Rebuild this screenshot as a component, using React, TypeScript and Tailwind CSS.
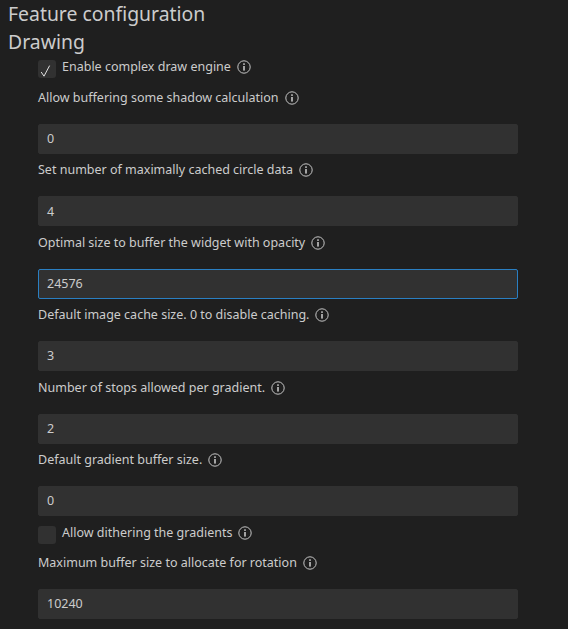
function InfoIcon() {
  return (
    <svg width="14" height="14" viewBox="0 0 14 14" fill="none" className="ml-[6px] shrink-0">
      <circle cx="7" cy="7" r="6.2" stroke="#c5c5c5" strokeWidth="1" />
      <rect x="6.2" y="3.3" width="1.6" height="1.6" fill="#c5c5c5" />
      <rect x="6.2" y="6" width="1.6" height="4.6" fill="#c5c5c5" />
    </svg>
  );
}

function CheckRow({ label, checked, className }: { label: string; checked?: boolean; className?: string }) {
  return (
    <div className={`flex h-[18px] items-start ${className ?? ''}`}>
      <div className="h-[18px] w-[18px] rounded-[3px] bg-[#313131]">
        {checked && (
          <svg width="18" height="18" viewBox="0 0 18 18" fill="none">
            <path d="M3.2 12 L6 16.2 L11.6 5.6" stroke="#e0e0e0" strokeWidth="1" />
          </svg>
        )}
      </div>
      <div className="ml-[6px] flex h-[14px] items-center whitespace-nowrap">
        <span>{label}</span>
        <InfoIcon />
      </div>
    </div>
  );
}

function Field({ label, value, focused, top }: { label: string; value: string; focused?: boolean; top?: string }) {
  return (
    <div>
      <div className={`flex items-center h-[18px] whitespace-nowrap ${top ?? 'mt-[7.6px]'} mb-[16.9px]`}>
        <span>{label}</span>
        <InfoIcon />
      </div>
      <div
        className={`flex h-[30px] w-[480px] items-center rounded-[2px] border px-2 pt-px ${
          focused ? 'border-[#2a7fc2] bg-[#313131]' : 'border-[#313131] bg-[#313131]'
        }`}
      >
        {value}
      </div>
    </div>
  );
}

export default function App() {
  return (
    <div className="h-[629px] w-[568px] overflow-hidden bg-[#1f1f1f] text-[12.5px] text-[#cccccc] [font-family:'Noto_Sans',sans-serif]">
      <h1 className="pl-2 text-[19.4px] leading-[27px]">Feature configuration</h1>
      <h2 className="mt-px pl-2 text-[19.4px] leading-[28px]">Drawing</h2>
      <div className="pl-[38px] pt-[4px]">
        <CheckRow label="Enable complex draw engine" checked />
        <Field label="Allow buffering some shadow calculation" value="0" top="mt-[11px]" />
        <Field label="Set number of maximally cached circle data" value="4" />
        <Field label="Optimal size to buffer the widget with opacity" value="24576" focused />
        <Field label="Default image cache size. 0 to disable caching." value="3" />
        <Field label="Number of stops allowed per gradient." value="2" />
        <Field label="Default gradient buffer size." value="0" />
        <CheckRow label="Allow dithering the gradients" className="mt-[9.6px]" />
        <Field label="Maximum buffer size to allocate for rotation" value="10240" top="mt-[10.4px]" />
      </div>
    </div>
  );
}
